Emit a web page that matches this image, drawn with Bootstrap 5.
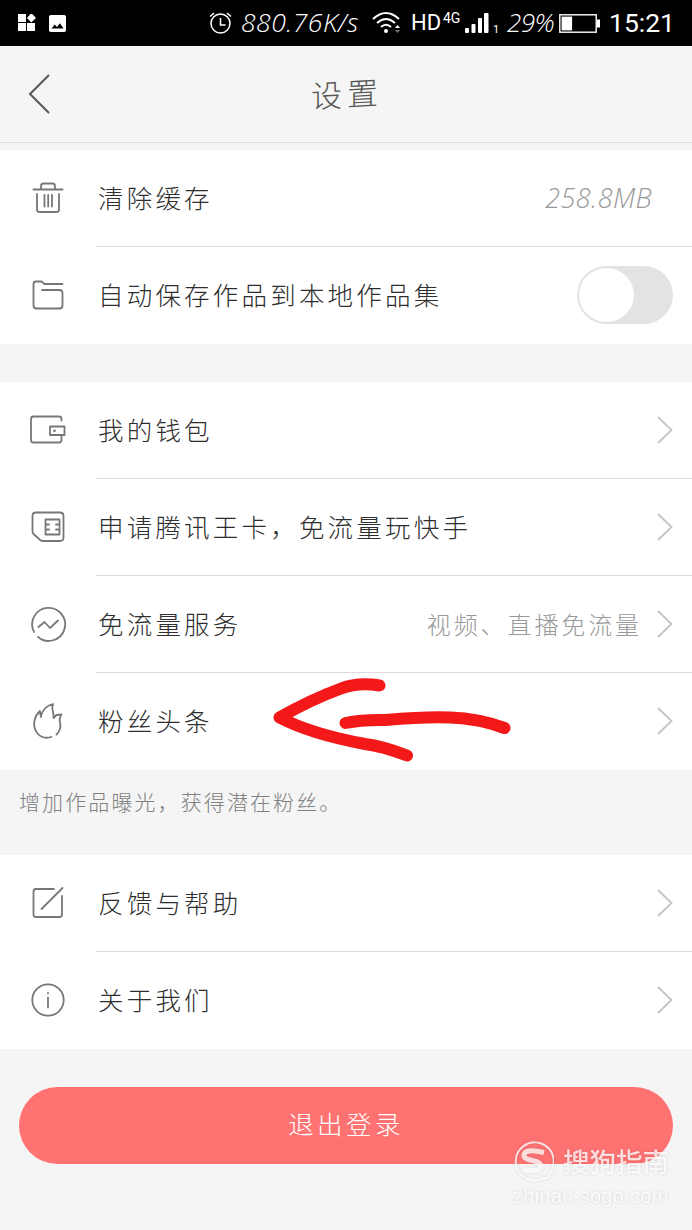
<!DOCTYPE html>
<html lang="zh-CN">
<head>
<meta charset="utf-8">
<meta name="viewport" content="width=device-width, initial-scale=1">
<title>设置</title>
<link href="https://cdn.jsdelivr.net/npm/bootstrap@5.3.0/dist/css/bootstrap.min.css" rel="stylesheet">
<style>
body{background:#f5f5f5;color:#2e2e2e;font-family:"Liberation Sans","Noto Sans CJK SC",sans-serif;overflow:hidden;height:1230px}
svg{display:block;flex:none}
.cjk{font-family:"Noto Sans CJK SC",sans-serif;font-weight:300;line-height:1;white-space:nowrap}
.statusbar{height:46px;background:#000;color:#fff;padding-left:18px;line-height:46px;white-space:nowrap}
.statusbar span{flex:none}
.statusbar .slanted{line-height:44px;height:46px}
.slanted{font-family:"Open Sans",sans-serif;font-style:italic;font-weight:300}
.ic-photo{margin-left:13px}
.ic-clock{margin-left:143px}
.speed{width:130px;margin-left:9px;font-size:26.5px;letter-spacing:.5px}
.ic-wifi{margin-left:1px}
.hd{width:30px;margin-left:10px;font:400 22px/46px Roboto,sans-serif}
.net{width:20px;margin-left:2px;font:400 14px/36px Roboto,sans-serif;height:46px}
.ic-signal{margin-left:2px}
.sim{width:9px;margin-left:4px;height:46px;font:400 11px/59px Roboto,sans-serif}
.pct{width:48px;margin-left:5px;font-size:26px;letter-spacing:-.5px}
.ic-batt{margin-left:4px}
.time{margin-left:9px;font:400 26.500px/46px Roboto,sans-serif}
.topbar{height:97px;border-bottom:1.500px solid #dfdfdf;padding-left:28px;padding-right:28px}
.topbar h1{font-size:31px;letter-spacing:5px;color:#555;transform:skewY(-3deg);padding-bottom:3px}
.topbar .spacer{width:22px}
.first{margin-top:7px}
.second{margin-top:38px}
.section{background:#fff}
.item{height:97px;padding-left:28px}
.item .glyph{width:40px;margin-right:28px;margin-bottom:1px;stroke:#777;stroke-width:1.8;fill:none;stroke-linecap:round;stroke-linejoin:round}
.item .body-line{height:97px;border-bottom:1px solid #dcdcdc;padding:0 19px 0 2px}
.item:last-child .body-line{border-bottom-color:transparent}
.label{font-size:25.5px;letter-spacing:3.2px;padding-bottom:3px}
.extra{font-size:24px;letter-spacing:2.9px;color:#999;margin-right:15px}
.size{font-size:27px;line-height:1;color:#999;margin-right:21px;letter-spacing:.4px;padding-bottom:2px}
.chev{stroke:#c4c4c4;stroke-width:1.8;fill:none}
.toggle{width:96px;height:58px;border-radius:29px;background:#e3e3e3;padding:2px;flex:none}
.knob{width:55px;height:54px;border-radius:50%;background:#fff}
.note{height:85px;padding:21px 19px 0;color:#808080}
.note .cjk{font-size:21px;letter-spacing:2.1px}
.logout{margin:38px 19px 0;height:77px;width:654px;border:0;border-radius:39px;background:#ff7272;color:#fff;font-size:25.5px;letter-spacing:3.4px;padding-bottom:6px}
.arrow-mark{left:-96px;top:0;pointer-events:none;overflow:visible}
.watermark{left:512px;top:1141px;color:rgba(255,255,255,.78);filter:drop-shadow(0 0 1.5px rgba(0,0,0,.16))}
.watermark .brand{font-size:26.5px;font-weight:500;margin-left:9px}
.watermark .site{font-size:20px;line-height:20px;letter-spacing:.3px;margin-top:4px;margin-left:1px}
</style>
</head>
<body class="position-relative">
<div class="statusbar d-flex align-items-center">
  <svg width="18" height="18" viewBox="0 0 18 18" fill="#fff"><path d="M0 0h8v8H0zM0 9h8v8H0zM9 9h8v8H9zM13.300-1L18 4l-4.700 4.500L9 4z"/></svg>
  <svg class="ic-photo" width="17" height="17" viewBox="0 0 17 17"><rect width="17" height="17" rx="1.800" fill="#fff"/><path d="M2.500 13.500l3.200-4 2.200 2.500 3-3.800 3.700 5.300z" fill="#000"/></svg>
  <svg class="ic-clock" width="23" height="23" viewBox="0 0 23 23" fill="none" stroke="#fff" stroke-width="1.500"><circle cx="11.500" cy="11.500" r="9.500"/><path d="M11.500 6v7h5M1 4.500l4-3.400M22 4.500l-4-3.400"/></svg>
  <span class="slanted speed">880.76K/s</span>
  <svg class="ic-wifi" width="29" height="24" viewBox="0 0 29 24" fill="none" stroke="#fff" stroke-width="2"><path d="M1 8Q14-4 27 8M5 12q9-8 18 0M9 16q5-4.500 10 0"/><circle cx="14" cy="20" r="2" fill="#fff" stroke="none"/><path d="M23 17l2.500-3 2.500 3z" fill="#fff" stroke="none"/><path d="M23 19l2.500 3 2.500-3z" fill="#777" stroke="none"/></svg>
  <span class="hd">HD</span>
  <span class="net">4G</span>
  <svg class="ic-signal" width="24" height="21" viewBox="0 0 24 21" fill="#fff"><rect y="15" width="4" height="5" rx="1"/><rect x="6.500" y="11" width="4" height="9" rx="1"/><rect x="13" y="5" width="4" height="15" rx="1"/><rect x="19" width="4.500" height="20" rx="1"/></svg>
  <span class="sim">1</span>
  <span class="slanted pct">29%</span>
  <svg class="ic-batt" width="41" height="19" viewBox="0 0 41 19" fill="#fff"><rect x=".8" y=".8" width="36.400" height="17.400" fill="none" stroke="#fff" stroke-width="1.400"/><rect x="2.600" y="2.600" width="10.500" height="13.800"/><rect x="38" y="5.500" width="3" height="8"/></svg>
  <span class="time">15:21</span>
</div>

<header class="topbar d-flex align-items-center position-relative">
  <svg width="24" height="40" viewBox="0 0 24 40" fill="none" stroke="#555" stroke-width="2"><path d="M21 1L2 20l19 19"/></svg>
  <h1 class="cjk mb-0 flex-grow-1 text-center">设置</h1>
  <div class="spacer"></div>
</header>

<main>
<section class="section first">
  <div class="item d-flex align-items-center">
    <svg class="glyph" height="40" viewBox="0 0 40 40"><path d="M5.500 11.500h29M13 11V8q0-2.500 2.500-2.500h9Q27 5.500 27 8v3M9 16v15.500q0 2.500 2.500 2.500h17q2.500 0 2.500-2.500V16M16.500 17v11.500M20.200 17v11.500M24 17v11.500"/></svg>
    <div class="body-line d-flex align-items-center flex-grow-1"><span class="label cjk">清除缓存</span><span class="size slanted ms-auto">258.8MB</span></div>
  </div>
  <div class="item d-flex align-items-center">
    <svg class="glyph" height="40" viewBox="0 0 40 40"><path d="M34.500 9H16.500l-3-2.500H8q-2.500 0-2.500 2.500v21.500Q5.500 33.500 8.500 33.500h23q3 0 3-3V18q0-3-3-3H14"/></svg>
    <div class="body-line d-flex align-items-center flex-grow-1"><span class="label cjk">自动保存作品到本地作品集</span><div class="toggle ms-auto" role="switch" aria-checked="false"><div class="knob"></div></div></div>
  </div>
</section>

<section class="section second">
  <div class="item d-flex align-items-center">
    <svg class="glyph" height="40" viewBox="0 0 40 40"><path d="M33.500 10.500V9q0-2.500-2.500-2.500H5.500Q3 6.500 3 9v21q0 2.500 2.500 2.500H31q2.500 0 2.500-2.500v-4.500M22 16.500h14.500v8.500H22z"/><circle cx="26.500" cy="20.800" r=".5"/></svg>
    <div class="body-line d-flex align-items-center flex-grow-1"><span class="label cjk">我的钱包</span><svg class="chev ms-auto" width="16" height="28" viewBox="0 0 16 28"><path d="M1 1l13.500 13L1 27"/></svg></div>
  </div>
  <div class="item d-flex align-items-center">
    <svg class="glyph" height="40" viewBox="0 0 40 40"><path d="M8 5.500h24q3.500 0 3.500 3.500v21.500q0 3.500-3.500 3.500H15q-1.500 0-2.500-.8L6 27.500q-1.500-1.300-1.500-3V9q0-3.500 3.500-3.500z"/><path d="M17.500 12.500h14v15h-14zM19 17.500h2M19 22.500h2M28 17.500h2M28 22.500h2"/></svg>
    <div class="body-line d-flex align-items-center flex-grow-1"><span class="label cjk">申请腾讯王卡，免流量玩快手</span><svg class="chev ms-auto" width="16" height="28" viewBox="0 0 16 28"><path d="M1 1l13.500 13L1 27"/></svg></div>
  </div>
  <div class="item d-flex align-items-center">
    <svg class="glyph" height="40" viewBox="0 0 40 40"><path d="M6 28A16.500 16.500 0 1 1 10 33M10.500 23l6-5 5.500 6 8-7.500"/></svg>
    <div class="body-line d-flex align-items-center flex-grow-1"><span class="label cjk">免流量服务</span><span class="extra cjk ms-auto">视频、直播免流量</span><svg class="chev" width="16" height="28" viewBox="0 0 16 28"><path d="M1 1l13.500 13L1 27"/></svg></div>
  </div>
  <div class="item d-flex align-items-center">
    <svg class="glyph" height="40" viewBox="0 0 40 40"><path d="M23.500 36Q15 38.500 9.500 32.500 5 27 6.500 19.500 8 13.500 12 10l.8 6Q15 5.500 25 3q-1.500 4 0 8 .8 3 .5 6l3-3 5-.5q-2.800 4-1.300 8.500 1.300 6.500-3.700 11.500"/></svg>
    <div class="body-line d-flex align-items-center flex-grow-1 position-relative"><span class="label cjk">粉丝头条</span>
      <svg class="arrow-mark position-absolute" width="692" height="97" viewBox="0 0 692 97" fill="none" stroke="#f31919" stroke-width="12" stroke-linecap="round" stroke-linejoin="round"><path d="M379.500 12.500Q358 9 341 15.500 310 27 279.500 44.500 311 61 365 71q17 2 42 11.500M345.500 50q16-3.500 40-3 40-3.500 65-2.500 28 1 54 10.500"/></svg>
      <svg class="chev ms-auto" width="16" height="28" viewBox="0 0 16 28"><path d="M1 1l13.500 13L1 27"/></svg></div>
  </div>
</section>
<div class="note"><div class="cjk">增加作品曝光，获得潜在粉丝。</div></div>

<section class="section">
  <div class="item d-flex align-items-center">
    <svg class="glyph" height="40" viewBox="0 0 40 40"><path d="M26 6H8Q5.500 6 5.500 8.500v23Q5.500 34 8 34h23.500q2.500 0 2.500-2.500V13M34.500 5L13.500 26"/></svg>
    <div class="body-line d-flex align-items-center flex-grow-1"><span class="label cjk">反馈与帮助</span><svg class="chev ms-auto" width="16" height="28" viewBox="0 0 16 28"><path d="M1 1l13.500 13L1 27"/></svg></div>
  </div>
  <div class="item d-flex align-items-center">
    <svg class="glyph" height="40" viewBox="0 0 40 40"><circle cx="20" cy="20" r="15.700"/><path d="M20 17.500v10M20 13v.4"/></svg>
    <div class="body-line d-flex align-items-center flex-grow-1"><span class="label cjk">关于我们</span><svg class="chev ms-auto" width="16" height="28" viewBox="0 0 16 28"><path d="M1 1l13.500 13L1 27"/></svg></div>
  </div>
</section>
<button class="logout cjk d-block" type="button">退出登录</button>
</main>

<div class="watermark position-absolute">
  <div class="d-flex align-items-center">
    <svg width="42" height="41" viewBox="0 0 42 41" fill="none" stroke="currentColor"><path d="M36 34A19 19 0 1 0 31 37.500q4 .5 7-3" stroke-width="2"/><path d="M32 11.500Q12 7 12 14.500c0 6 17 4 17 10.500 0 6-9 5.500-18 3.500" stroke-width="5"/></svg>
    <span class="brand cjk">搜狗指南</span>
  </div>
  <div class="site">zhinan.sogo.com</div>
</div>
<script src="https://cdn.jsdelivr.net/npm/bootstrap@5.3.0/dist/js/bootstrap.bundle.min.js"></script>
</body>
</html>
